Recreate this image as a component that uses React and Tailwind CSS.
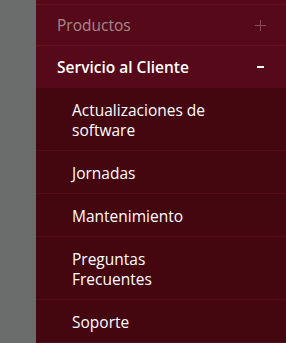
import React from 'react';

const subItems = ['Actualizaciones de software', 'Jornadas', 'Mantenimiento', 'Preguntas Frecuentes', 'Soporte'];

export default function App() {
  return (
    <div className="flex w-[286px] h-[343px] overflow-hidden" style={{ fontFamily: '"Open Sans", Roboto, sans-serif' }}>
      {/* gray page edge */}
      <div className="w-[36px] shrink-0 bg-[#6b6c6c]" />

      {/* menu panel */}
      <nav className="flex-1 flex flex-col min-h-0 bg-[#560918]">
        <div className="h-[5px] shrink-0 border-b border-[#63121f]" />

        <div className="flex shrink-0 items-center justify-between pl-[21px] pr-[20px] py-[10px] border-b border-[#63121f]">
          <span className="text-[15.5px] leading-[20px] text-[#a8898f]">Productos</span>
          <svg width="11" height="11" viewBox="0 0 11 11" className="text-[#8c4a58]">
            <path d="M5.5 0v11M0 5.5h11" stroke="currentColor" strokeWidth="1" />
          </svg>
        </div>

        <div className="flex shrink-0 items-center justify-between pl-[21px] pr-[22px] py-[11px]">
          <span className="text-[15.5px] leading-[20px] font-semibold text-white">Servicio al Cliente</span>
          <span className="w-[7px] h-[2px] bg-white" />
        </div>

        {/* submenu */}
        <ul className="flex-1 min-h-0 overflow-hidden bg-[#44060f]">
          {subItems.map((item) => (
            <li key={item} className="pl-[36px] pr-[64px] pt-[12px] pb-[10px] border-b border-[#510e19] text-[15.5px] leading-[20px] text-white">
              {item}
            </li>
          ))}
        </ul>
      </nav>
    </div>
  );
}
